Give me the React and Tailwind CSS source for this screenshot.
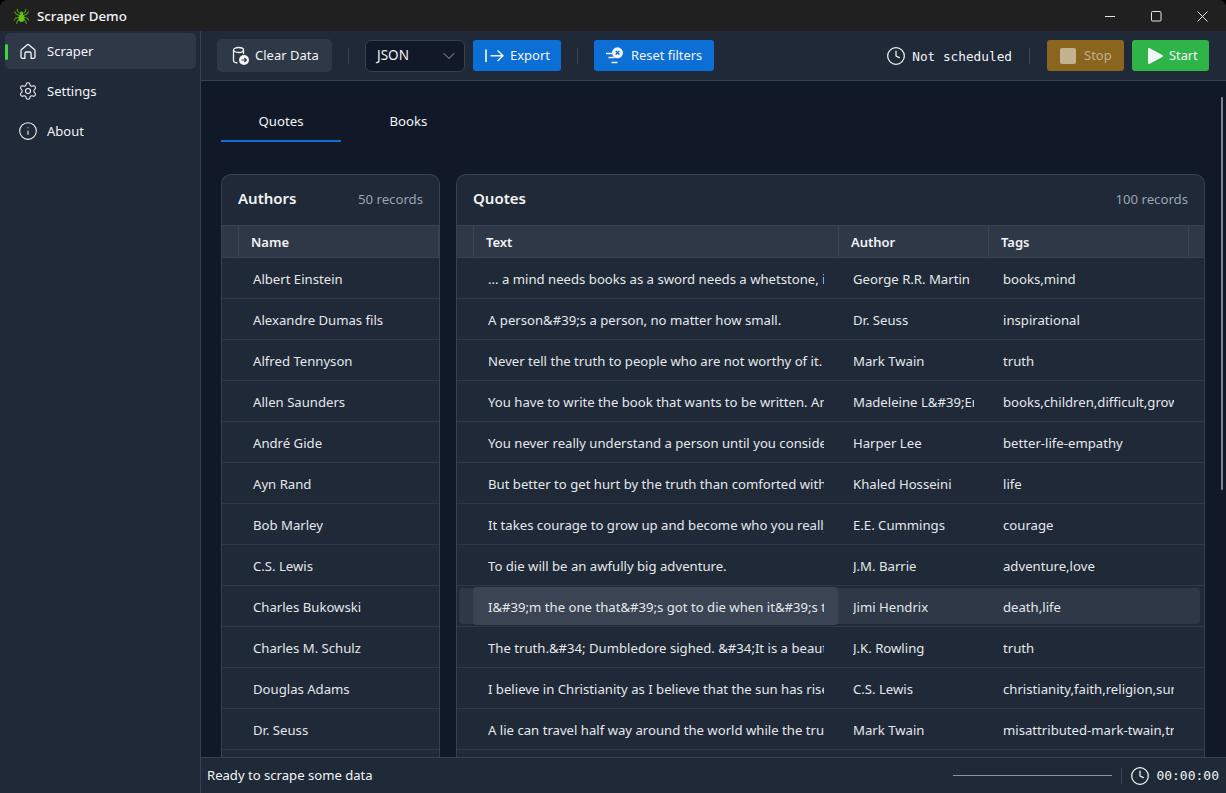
import React from 'react';
import { Settings, Info, Clock, ChevronDown } from 'lucide-react';

const authors = [
  'Albert Einstein', 'Alexandre Dumas fils', 'Alfred Tennyson', 'Allen Saunders', 'André Gide', 'Ayn Rand',
  'Bob Marley', 'C.S. Lewis', 'Charles Bukowski', 'Charles M. Schulz', 'Douglas Adams', 'Dr. Seuss', 'Elie Wiesel',
];

const quotes = [
  ['... a mind needs books as a sword needs a whetstone, if it is to keep its edge.', 'George R.R. Martin', 'books,mind'],
  ['A person&#39;s a person, no matter how small.', 'Dr. Seuss', 'inspirational'],
  ['Never tell the truth to people who are not worthy of it.', 'Mark Twain', 'truth'],
  ['You have to write the book that wants to be written. And if the book will be too difficult', 'Madeleine L&#39;Engle', 'books,children,difficult,grown-ups'],
  ['You never really understand a person until you consider things from his point of view', 'Harper Lee', 'better-life-empathy'],
  ['But better to get hurt by the truth than comforted with a lie.', 'Khaled Hosseini', 'life'],
  ['It takes courage to grow up and become who you really are.', 'E.E. Cummings', 'courage'],
  ['To die will be an awfully big adventure.', 'J.M. Barrie', 'adventure,love'],
  ['I&#39;m the one that&#39;s got to die when it&#39;s time for me to die', 'Jimi Hendrix', 'death,life'],
  ['The truth.&#34; Dumbledore sighed. &#34;It is a beautiful and terrible thing', 'J.K. Rowling', 'truth'],
  ['I believe in Christianity as I believe that the sun has risen: Not only because I see it', 'C.S. Lewis', 'christianity,faith,religion,sun'],
  ['A lie can travel half way around the world while the truth is putting on its shoes.', 'Mark Twain', 'misattributed-mark-twain,truth'],
  ['Always be a poet, even in prose.', 'Charles Baudelaire', 'poetry'],
];

const SpiderIcon = () => (
  <svg width="17" height="17" viewBox="0 0 17 17" fill="none" stroke="#4c9e12" strokeWidth="1.100">
    <path d="M6.500 5.500 4.500 3 4 .8M10.500 5.500 12.500 3 13 .8M6 7.500 2.800 5.800 1.500 3.500M11 7.500 14.200 5.800 15.500 3.500M6 9.500 2.800 10 1 12.500M11 9.500 14.200 10 16 12.500M6.500 11 4 13.500 3.800 16M10.500 11 13 13.500 13.200 16" />
    <ellipse cx="8.500" cy="5" rx="1.800" ry="1.600" fill="#5cb811" stroke="none" />
    <ellipse cx="8.500" cy="10" rx="3" ry="4" fill="#66c414" stroke="none" />
  </svg>
);

const HomeIcon = () => (
  <svg width="20" height="20" viewBox="-1 -1 20 20" fill="none" stroke="currentColor" strokeWidth="1.300" strokeLinejoin="round">
    <path d="M2.600 7.600 8 2.900a1.500 1.500 0 0 1 2 0l5.400 4.700c.4.300.6.800.6 1.200v6a1.600 1.600 0 0 1-1.600 1.600h-2.300v-5a1.400 1.400 0 0 0-1.400-1.400H7.300a1.400 1.400 0 0 0-1.400 1.400v5H3.600A1.600 1.600 0 0 1 2 14.800v-6c0-.4.200-.9.600-1.200Z" />
  </svg>
);

const DatabaseIcon = () => (
  <svg width="18" height="20" viewBox="0 0 18 20" fill="none">
    <ellipse cx="6.500" cy="4" rx="5" ry="2.500" stroke="currentColor" strokeWidth="1.300" />
    <path d="M1.500 4v10.500c0 1.200 1.700 2.200 4 2.400M11.500 4v4" stroke="currentColor" strokeWidth="1.300" />
    <circle cx="12" cy="14" r="5" fill="currentColor" />
    <path d="M9.500 14h4.800M12.400 12l2 2-2 2" stroke="#2e3846" strokeWidth="1.200" />
  </svg>
);

const ExportIcon = () => (
  <svg width="19" height="14" viewBox="0 0 19 14" fill="none" stroke="currentColor" strokeWidth="1.400">
    <path d="M1 .5v12.500" strokeWidth="1.700" />
    <path d="M5.500 6.800H18M12.500 1.500l5.500 5.300-5.500 5.300" />
  </svg>
);

const ResetFilterIcon = () => (
  <svg width="20" height="18" viewBox="0 0 20 18" fill="none">
    <path d="M1 6.500h6M3.500 10.500h6M6.500 15.500h6" stroke="currentColor" strokeWidth="1.400" />
    <circle cx="12.500" cy="5.800" r="5.500" fill="currentColor" />
    <path d="m10.700 4 3.600 3.600M14.300 4l-3.600 3.600" stroke="#0b6fd6" strokeWidth="1.400" />
  </svg>
);

const NavItem = ({ icon, label, active }) => (
  <div className={`relative flex h-[36px] items-center gap-[9px] rounded-[5px] pl-[13px] text-[13px] ${active ? 'bg-[#2e3846]' : ''}`}>
    {active && <div className="absolute left-0 top-[11px] h-[16px] w-[3px] rounded-full bg-[#3fd53c]"></div>}
    {icon}
    <span className="pt-[2px]">{label}</span>
  </div>
);

const Separator = () => <div className="h-[16px] w-px bg-[#3b4553]"></div>;

const Cell = ({ width, children }) => (
  <div className={`${width} shrink-0 pl-[15px] pr-[14px] pt-[4px]`}>
    <div className="overflow-hidden whitespace-nowrap">{children}</div>
  </div>
);

const HeaderCell = ({ width, children }) => (
  <div className={`${width} flex h-full shrink-0 items-center border-r border-[#3b4553] pl-[12px] pt-[2px] text-[13px] font-semibold text-[#f3f4f6]`}>
    {children}
  </div>
);

const CardTitle = ({ title, count }) => (
  <div className="flex h-[50px] shrink-0 items-center justify-between pl-[16px] pr-[16px]">
    <span className="pb-[4px] text-[15px] font-semibold text-[#f3f4f6]">{title}</span>
    <span className="text-[13.200px] text-[#9ca3af]">{count}</span>
  </div>
);

const AuthorsCard = () => (
  <div className="flex w-[219px] shrink-0 flex-col rounded-t-[10px] border border-b-0 border-[#374151] bg-[#1f2937]">
    <CardTitle title="Authors" count="50 records" />
    <div className="flex h-[33px] shrink-0 items-center border-y border-[#374151] bg-[#2e3846]">
      <div className="h-full w-[17px] shrink-0 border-r border-[#3b4553]"></div>
      <HeaderCell width="w-[200px]">Name</HeaderCell>
    </div>
    {authors.map((name) => (
      <div key={name} className="flex h-[41px] shrink-0 items-center border-b border-[#2e3846] pl-[31px] pt-[4px] text-[13.150px] text-[#e5e7eb]">
        {name}
      </div>
    ))}
  </div>
);

const QuotesCard = () => (
  <div className="flex w-[749px] shrink-0 flex-col rounded-t-[10px] border border-b-0 border-[#374151] bg-[#1f2937]">
    <CardTitle title="Quotes" count="100 records" />
    <div className="flex h-[33px] shrink-0 items-center border-y border-[#374151] bg-[#2e3846]">
      <div className="h-full w-[17px] shrink-0 border-r border-[#3b4553]"></div>
      <HeaderCell width="w-[365px]">Text</HeaderCell>
      <HeaderCell width="w-[150px]">Author</HeaderCell>
      <HeaderCell width="w-[200px]">Tags</HeaderCell>
    </div>
    {quotes.map(([text, author, tags], i) => {
      const hovered = i === 8;
      return (
        <div key={i} className="flex h-[41px] shrink-0 items-center border-b border-[#2e3846] text-[13.150px] text-[#e5e7eb]">
          <div className={`ml-[2px] flex h-[36px] w-[741px] shrink-0 items-center rounded-[4px] ${hovered ? 'bg-[#2e3846]' : ''}`}>
            <div className="w-[14px] shrink-0"></div>
            <div className={`flex h-[38px] w-[365px] shrink-0 items-center rounded-[4px] ${hovered ? 'bg-[#3a4452]' : ''}`}>
              <Cell width="w-[365px]">{text}</Cell>
            </div>
            <Cell width="w-[150px]">{author}</Cell>
            <Cell width="w-[200px]">{tags}</Cell>
          </div>
        </div>
      );
    })}
  </div>
);

export default function App() {
  return (
    <div className="h-[793px] w-[1226px] overflow-hidden bg-black font-['Noto_Sans',sans-serif] text-[#f3f4f6]">
      <div className="flex h-full flex-col overflow-hidden rounded-t-[8px] bg-[#1f2937]">
        {/* title bar */}
        <div className="flex h-[31px] shrink-0 items-center bg-[#202020] pl-[13px] pt-[2px]">
          <SpiderIcon />
          <span className="ml-[7px] text-[13.300px] font-medium">Scraper Demo</span>
          <div className="ml-auto flex items-center gap-[35px] pr-[18px]">
            <svg width="11" height="11" viewBox="0 0 11 11" stroke="#e5e5e5"><path d="M0 5.500h10" /></svg>
            <svg width="11" height="11" viewBox="0 0 11 11" fill="none" stroke="#e5e5e5"><rect x=".5" y=".5" width="9.500" height="9.500" rx="1" /></svg>
            <svg width="11" height="11" viewBox="0 0 11 11" stroke="#e5e5e5"><path d="m.5.500 10 10M10.500.500l-10 10" /></svg>
          </div>
        </div>

        <div className="flex min-h-0 flex-1">
          {/* sidebar */}
          <div className="flex w-[201px] shrink-0 flex-col gap-[4px] border-r border-[#374151] pl-[5px] pr-[4px] pt-[2px]">
            <NavItem active label="Scraper" icon={<HomeIcon />} />
            <NavItem label="Settings" icon={<Settings size={20} strokeWidth={1.300} />} />
            <NavItem label="About" icon={<Info size={20} strokeWidth={1.300} />} />
          </div>

          <div className="flex min-w-0 flex-1 flex-col">
            {/* toolbar */}
            <div className="flex h-[50px] shrink-0 items-center border-b border-[#374151] pl-[16px] pr-[17px]">
              <div className="flex h-[33px] w-[115px] items-center gap-[5px] rounded-[5px] bg-[#2e3846] pl-[15px] text-[13px]">
                <DatabaseIcon />
                <span>Clear Data</span>
              </div>
              <div className="mx-[16px]"><Separator /></div>
              <div className="flex h-[32px] w-[100px] items-center justify-between rounded-[6px] border border-[#374151] bg-[#111827] pl-[11px] pr-[5px] text-[13.500px]">
                <span>JSON</span>
                <ChevronDown size={20} strokeWidth={1.200} className="text-[#9ca3af]" />
              </div>
              <div className="ml-[8px] flex h-[31px] w-[88px] items-center gap-[6px] rounded-[3px] bg-[#0b6fd6] pl-[12px] text-[13px]">
                <ExportIcon />
                <span>Export</span>
              </div>
              <div className="mx-[16px]"><Separator /></div>
              <div className="flex h-[31px] w-[120px] items-center gap-[6px] rounded-[3px] bg-[#0b6fd6] pl-[11px] text-[12.900px]">
                <ResetFilterIcon />
                <span>Reset filters</span>
              </div>
              <div className="ml-auto flex items-center">
                <Clock size={20} strokeWidth={1.500} />
                <span className="ml-[6px] pt-[2px] font-['DejaVu_Sans_Mono',monospace] text-[12.750px]">Not scheduled</span>
              </div>
              <div className="mx-[17px]"><Separator /></div>
              <div className="flex h-[31px] w-[77px] items-center gap-[8px] rounded-[3px] bg-[#8a651e] pl-[13px] text-[13px] text-[#c2ae8c]">
                <div className="h-[16px] w-[16px] rounded-[2px] bg-[#c2b28f]"></div>
                <span>Stop</span>
              </div>
              <div className="ml-[8px] flex h-[31px] w-[77px] items-center gap-[6px] rounded-[3px] bg-[#2fb44a] pl-[16px] text-[12.800px]">
                <svg width="15" height="16" viewBox="0 0 15 16" fill="currentColor"><path d="M0 1.200C0 .300.900-.200 1.700.300l12.600 6.800c.800.400.800 1.500 0 1.900L1.700 15.700C.900 16.200 0 15.700 0 14.800Z" /></svg>
                <span>Start</span>
              </div>
            </div>

            {/* content */}
            <div className="relative min-h-0 flex-1 overflow-hidden bg-[#111827] pl-[20px] pt-[17px]">
              <div className="flex text-[13.200px]">
                <div className="flex h-[44px] w-[120px] items-center justify-center border-b-2 border-[#0b6fd6] pt-[6px]">Quotes</div>
                <div className="flex h-[44px] w-[135px] items-center justify-center border-b-2 border-transparent pt-[6px]">Books</div>
              </div>
              <div className="mt-[32px] flex gap-[16px]">
                <AuthorsCard />
                <QuotesCard />
              </div>
              <div className="absolute right-[3px] top-[16px] h-[393px] w-[2px] rounded-full bg-[#7d838c]"></div>
            </div>

            {/* status bar */}
            <div className="flex h-[36px] shrink-0 items-center border-t border-[#374151] pl-[6px] pr-[7px] text-[13.100px]">
              <span>Ready to scrape some data</span>
              <div className="ml-auto h-px w-[159px] bg-[#8b949e]"></div>
              <div className="ml-[9px] mr-[8px] h-[16px] w-px bg-[#3b4553]"></div>
              <Clock size={20} strokeWidth={1.500} />
              <span className="ml-[6px] font-['DejaVu_Sans_Mono',monospace] text-[13px]">00:00:00</span>
            </div>
          </div>
        </div>
      </div>
    </div>
  );
}
